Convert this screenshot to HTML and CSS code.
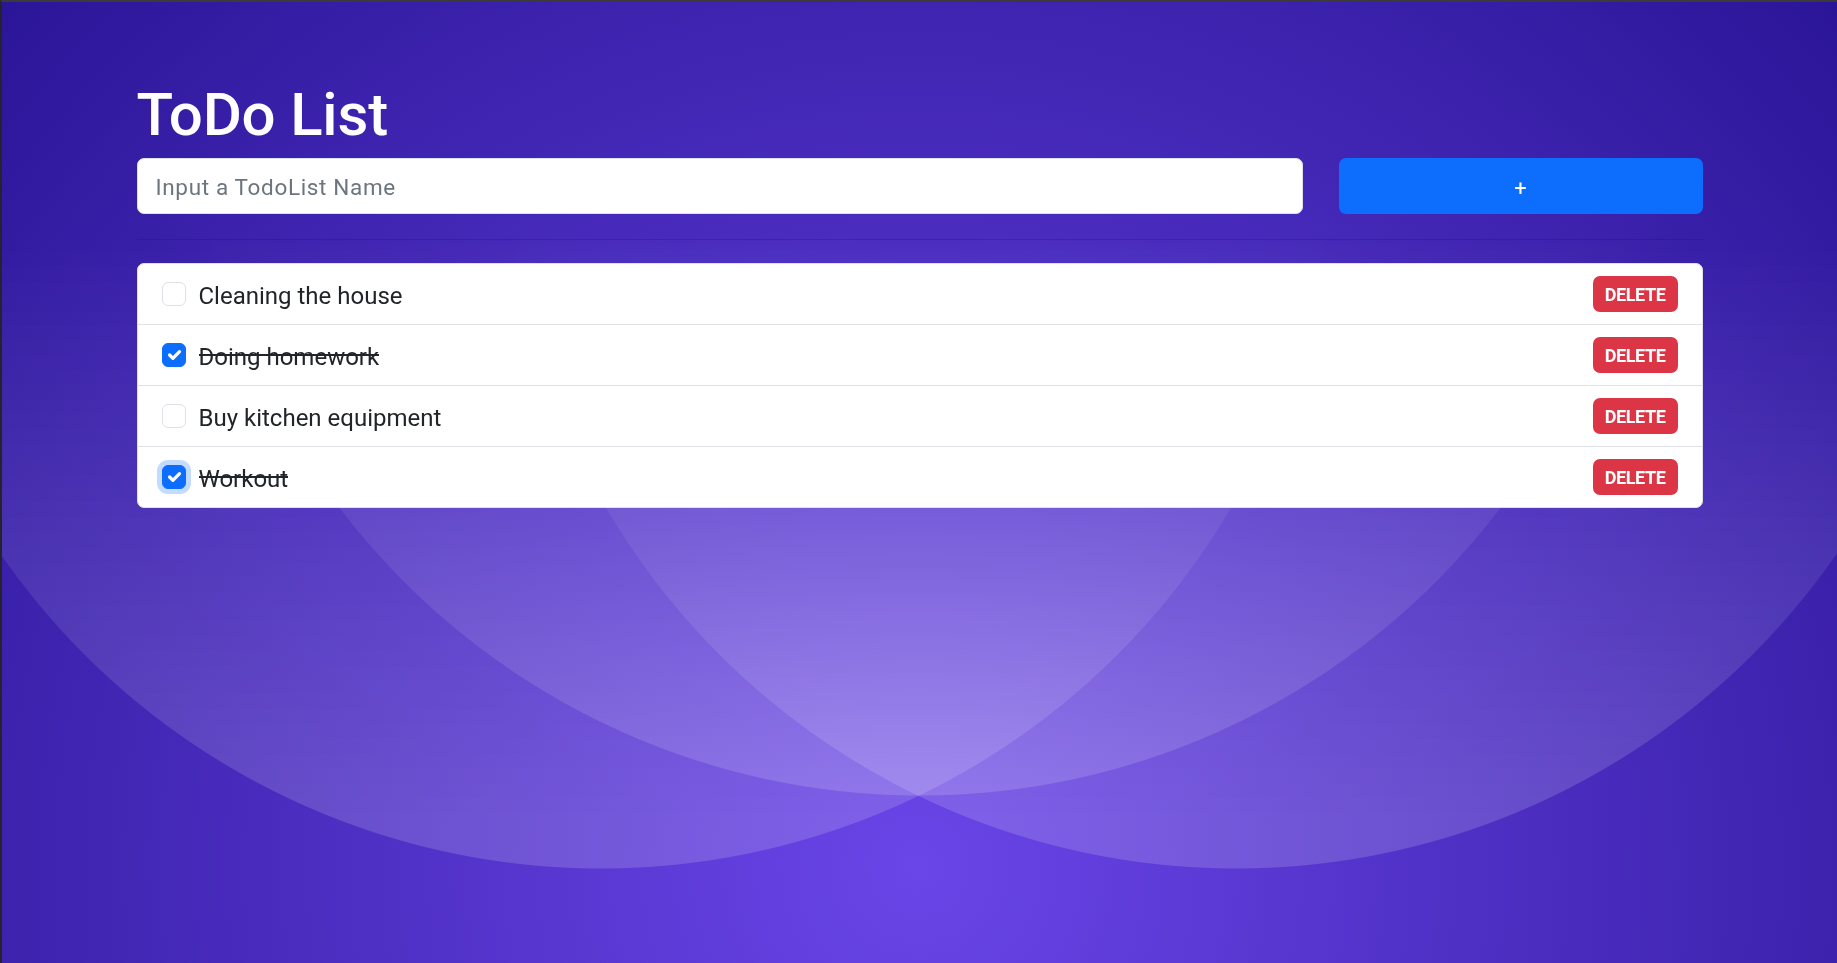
FILE: index.html
```html
<!DOCTYPE html>
<html lang="en">
<head>
  <meta charset="UTF-8">
  <meta name="viewport" content="width=device-width, initial-scale=1.0">
  <title>ToDo List</title>
  <link rel="stylesheet" href="styles.css">
</head>
<body>
  <div class="todo">
    <h1 class="title">ToDo List</h1>
    <form class="add-form" onsubmit="addItem(event)">
      <input class="add-input" id="newItem" type="text" placeholder="Input a TodoList Name">
      <button class="add-btn" type="submit">+</button>
    </form>
    <hr class="divider">
    <ul class="list" id="list">
      <li class="item">
        <span class="check" onclick="toggleItem(this)"><svg viewBox="0 0 20 20"><path d="m6 10 3 3 6-6" fill="none" stroke="#fff" stroke-width="3" stroke-linecap="round" stroke-linejoin="round"/></svg></span>
        <span class="label"><span class="text">Cleaning the house</span></span>
        <button class="delete" onclick="deleteItem(this)">Delete</button>
      </li>
      <li class="item done">
        <span class="check" onclick="toggleItem(this)"><svg viewBox="0 0 20 20"><path d="m6 10 3 3 6-6" fill="none" stroke="#fff" stroke-width="3" stroke-linecap="round" stroke-linejoin="round"/></svg></span>
        <span class="label"><span class="text">Doing homework</span></span>
        <button class="delete" onclick="deleteItem(this)">Delete</button>
      </li>
      <li class="item">
        <span class="check" onclick="toggleItem(this)"><svg viewBox="0 0 20 20"><path d="m6 10 3 3 6-6" fill="none" stroke="#fff" stroke-width="3" stroke-linecap="round" stroke-linejoin="round"/></svg></span>
        <span class="label"><span class="text">Buy kitchen equipment</span></span>
        <button class="delete" onclick="deleteItem(this)">Delete</button>
      </li>
      <li class="item done">
        <span class="check focus" onclick="toggleItem(this)"><svg viewBox="0 0 20 20"><path d="m6 10 3 3 6-6" fill="none" stroke="#fff" stroke-width="3" stroke-linecap="round" stroke-linejoin="round"/></svg></span>
        <span class="label"><span class="text">Workout</span></span>
        <button class="delete" onclick="deleteItem(this)">Delete</button>
      </li>
    </ul>
  </div>

  <script>
    const list = document.getElementById("list");

    function toggleItem(check) {
      document.querySelectorAll(".check.focus").forEach(c => c.classList.remove("focus"));
      check.classList.add("focus");
      check.parentElement.classList.toggle("done");
    }

    function deleteItem(button) {
      button.parentElement.remove();
    }

    function addItem(event) {
      event.preventDefault();
      const input = document.getElementById("newItem");
      const name = input.value.trim();
      if (!name) return;
      const item = list.firstElementChild.cloneNode(true);
      item.classList.remove("done");
      item.querySelector(".check").classList.remove("focus");
      item.querySelector(".text").textContent = name;
      list.appendChild(item);
      input.value = "";
    }
  </script>
</body>
</html>
```

FILE: styles.css
```css
* {
  box-sizing: border-box;
}

html {
  height: 100%;
  background: radial-gradient(circle farthest-corner at 50% 90%, #6a45e8, #2b1597);
}

body {
  margin: 0;
  min-height: 100vh;
  border-top: 2px solid #3b3b3b;
  border-left: 2px solid #26232f;
  font-family: Roboto, "Liberation Sans", sans-serif;
  color: #212529;
}

/* soft circles behind the page, fading in towards the bottom */
body::before {
  content: "";
  position: fixed;
  inset: 0;
  z-index: -1;
  background:
    radial-gradient(circle 731px at 601px 138px, rgba(255, 255, 255, 0.155) 730px, transparent 731px),
    radial-gradient(circle 731px at 1236px 138px, rgba(255, 255, 255, 0.155) 730px, transparent 731px),
    radial-gradient(circle 730px at 920px 66px, rgba(255, 255, 255, 0.155) 729px, transparent 730px);
  -webkit-mask-image: linear-gradient(to bottom, transparent 230px, #000 820px);
  mask-image: linear-gradient(to bottom, transparent 230px, #000 820px);
}

.todo {
  width: 1566px;
  margin: 0 auto;
  padding-top: 77px;
}

.title {
  margin: 0 0 7px;
  font-size: 60px;
  font-weight: 500;
  line-height: 72px;
  letter-spacing: -0.2px;
  color: #fff;
}

.add-form {
  display: grid;
  grid-template-columns: 1fr 364px;
  gap: 36px;
}

.add-input {
  height: 56px;
  padding: 2px 18px 0;
  border: 1px solid #dee2e6;
  border-radius: 7px;
  background: #fff;
  font-family: Roboto, "Liberation Sans", sans-serif;
  font-size: 22.5px;
  letter-spacing: 0.65px;
  color: #212529;
  outline: none;
}

.add-input::placeholder {
  color: #6c757d;
}

.add-btn {
  height: 56px;
  padding: 4px 0 0;
  border: none;
  border-radius: 7px;
  background: #0d6efd;
  color: #fff;
  font-family: Roboto, "Liberation Sans", sans-serif;
  font-size: 22px;
  cursor: pointer;
}

.divider {
  margin: 25px 0 23px;
  border: 0;
  border-top: 1px solid rgba(33, 37, 41, 0.35);
}

.list {
  list-style: none;
  margin: 0;
  padding: 0;
  background: #fff;
  border: 1px solid #dee2e6;
  border-radius: 7px;
}

.item {
  box-sizing: content-box;
  display: flex;
  align-items: center;
  height: 60px;
  padding: 0 24px;
}

.item + .item {
  border-top: 1px solid #dee2e6;
}

.check {
  display: flex;
  flex-shrink: 0;
  width: 24px;
  height: 24px;
  margin-right: 13px;
  border: 1px solid #dee2e6;
  border-radius: 6px;
  background: #fff;
  cursor: pointer;
}

.check svg {
  display: none;
  width: 100%;
  height: 100%;
}

.item.done .check {
  background: #0d6efd;
  border-color: #0d6efd;
}

.item.done .check svg {
  display: block;
}

.check.focus {
  box-shadow: 0 0 0 5px rgba(13, 110, 253, 0.25);
}

.label {
  flex: 1;
  margin-top: 4px;
  font-size: 24px;
  line-height: 36px;
}

.item.done .text {
  background: linear-gradient(#212529, #212529) no-repeat 0 10.5px / 100% 2px;
}

.delete {
  width: 85px;
  height: 36px;
  padding: 0;
  border: none;
  border-radius: 7px;
  background: #dc3545;
  color: #fff;
  font-family: Roboto, "Liberation Sans", sans-serif;
  font-size: 18px;
  font-weight: 700;
  letter-spacing: -0.4px;
  text-transform: uppercase;
  cursor: pointer;
}
```
